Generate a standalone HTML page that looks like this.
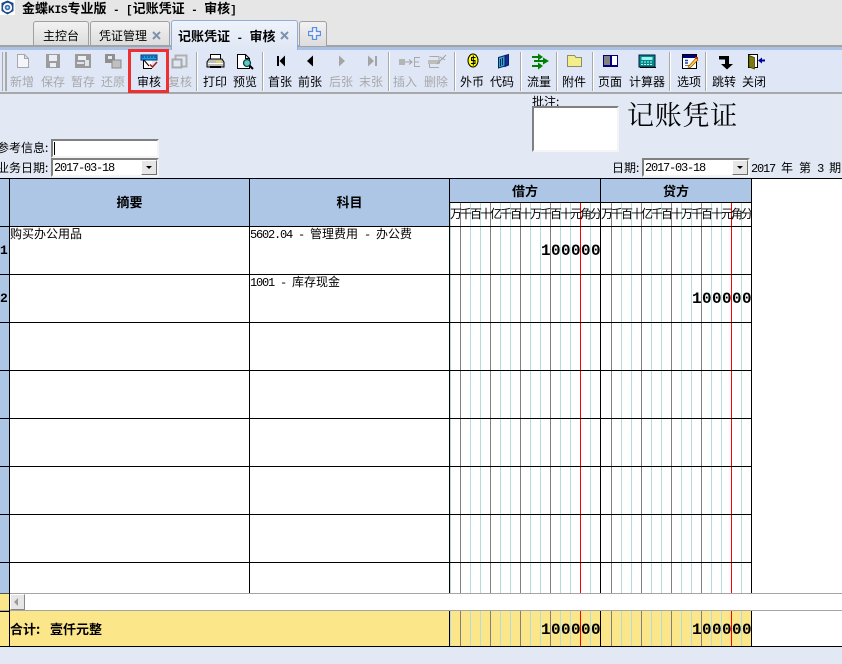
<!DOCTYPE html>
<html lang="zh"><head><meta charset="utf-8">
<style>
html,body{margin:0;padding:0;width:842px;height:664px;overflow:hidden;background:#e2e9f5}
body{position:relative;font:12px/14px "WenQuanYi Zen Hei","Noto Sans CJK SC",sans-serif;color:#000}
.a{position:absolute;white-space:nowrap}
.b{position:absolute}
.l{position:absolute;width:36px;text-align:center;top:75px;line-height:14px;color:#000}
.g{color:#a8a8a8}
.sep{position:absolute;top:52px;width:2px;height:39px;background:linear-gradient(90deg,#a9a9a9 50%,#fff 50%)}
.tab{position:absolute;box-sizing:border-box;border:1px solid #a0a0a0;border-bottom:0;border-radius:3px 3px 0 0;background:linear-gradient(#f2f2f2,#dcdcdc)}
.in{position:absolute;box-sizing:border-box;background:#fff;border:2px solid;border-color:#808080 #f4f4f4 #f4f4f4 #808080}
.mono{font-family:"Liberation Mono",monospace;font-size:12px;line-height:14px;letter-spacing:-1.2px;white-space:pre}
.t{font-family:"Liberation Mono",monospace;font-size:11px;letter-spacing:-.1px;white-space:pre}
.hd{font-weight:bold;font-size:13px;text-align:center;position:absolute}
.sub{position:absolute;top:207px;letter-spacing:-2px;width:151px;overflow:hidden;white-space:nowrap;line-height:14px;height:16px}
.num{position:absolute;font:bold 16px/16px "Liberation Mono",monospace;letter-spacing:.4px;white-space:nowrap}
.dig{position:absolute;background:repeating-linear-gradient(90deg,#808080 0 1px,transparent 1px 10px,#b5dcd8 10px 11px,transparent 11px 20px,#b5dcd8 20px 21px,transparent 21px 30px)}
.h{position:absolute;left:0;width:751px;height:1px;background:#000}
.v{position:absolute;width:1px;background:#000}
</style></head><body>

<!-- title area -->
<div class="b" style="left:0;top:0;width:842px;height:45px;background:#e6e6e6"></div>
<svg class="b" style="left:0;top:0" width="15" height="15" viewBox="0 0 15 15">
<rect width="15" height="15" fill="#fff"/>
<path d="M7.5 0.5 13.5 3V11L7.5 14.5 1.5 11V3Z" fill="#1c4c8c"/>
<circle cx="7.5" cy="7.5" r="4.6" fill="#fff"/>
<circle cx="7.5" cy="7.5" r="2.8" fill="#3f6fb5"/>
<circle cx="7.5" cy="7.5" r="1.1" fill="#dfe8f5"/>
</svg>
<div class="a" style="left:22px;top:1px;font-size:13px;font-weight:bold">金蝶<span class="t">KIS</span>专业版<span class="t"> - [</span>记账凭证<span class="t"> - </span>审核<span class="t">]</span></div>

<!-- tabs -->
<div class="tab" style="left:33px;top:21px;width:56px;height:25px"></div>
<div class="a" style="left:43px;top:29px">主控台</div>
<div class="tab" style="left:90px;top:21px;width:80px;height:25px"></div>
<div class="a" style="left:99px;top:29px">凭证管理</div>
<svg class="b" style="left:152px;top:31px" width="10" height="10"><path d="M1 1 8 8M8 1 1 8" stroke="#7f93ad" stroke-width="2"/></svg>
<div class="b" style="left:0;top:45px;width:842px;height:2px;background:#a3a3a3"></div>
<div class="b" style="left:0;top:47px;width:842px;height:3px;background:#a9c1e6"></div>
<div class="tab" style="left:171px;top:20px;width:127px;height:30px;background:linear-gradient(#eef3fb,#dfe7f5);border-color:#93acd6"></div>
<div class="a" style="left:178px;top:29px;font-size:13px;font-weight:bold">记账凭证<span class="t"> - </span>审核</div>
<svg class="b" style="left:280px;top:31px" width="10" height="10"><path d="M1 1 8 8M8 1 1 8" stroke="#7f93ad" stroke-width="2"/></svg>
<div class="tab" style="left:299px;top:21px;width:28px;height:25px"></div>
<svg class="b" style="left:308px;top:27px" width="13" height="13"><path d="M4.500 .5H8.500V4.500H12.500V8.500H8.500V12.500H4.500V8.500H.5V4.500H4.500Z" fill="#eef3fc" stroke="#5b8ee6" stroke-width="1.300"/></svg>

<!-- toolbar -->
<div class="b" style="left:0;top:50px;width:842px;height:42px;background:#dfe7f6"></div>
<div class="b" style="left:0;top:92px;width:842px;height:2px;background:#a8a8a8"></div>
<div class="b" style="left:2px;top:52px;width:1px;height:39px;background:#a9a9a9"></div>
<div class="b" style="left:5px;top:52px;width:2px;height:39px;background:#a9a9a9"></div>
<div class="sep" style="left:196px"></div><div class="sep" style="left:262px"></div><div class="sep" style="left:388px"></div>
<div class="sep" style="left:454px"></div><div class="sep" style="left:520px"></div><div class="sep" style="left:556px"></div>
<div class="sep" style="left:592px"></div><div class="sep" style="left:669px"></div><div class="sep" style="left:705px"></div>

<div class="l g" style="left:4px">新增</div><div class="l g" style="left:35px">保存</div><div class="l g" style="left:65px">暂存</div><div class="l g" style="left:95px">还原</div>
<div class="l" style="left:131px">审核</div>
<div class="l g" style="width:30px;left:168px;text-align:left;overflow:hidden">复核</div>
<div class="l" style="left:197px">打印</div><div class="l" style="left:227px">预览</div>
<div class="l" style="left:262px">首张</div><div class="l" style="left:292px">前张</div>
<div class="l g" style="left:323px">后张</div><div class="l g" style="left:353px">末张</div>
<div class="l g" style="left:387px">插入</div><div class="l g" style="left:418px">删除</div>
<div class="l" style="left:454px">外币</div><div class="l" style="left:484px">代码</div>
<div class="l" style="left:521px">流量</div><div class="l" style="left:556px">附件</div>
<div class="l" style="left:592px">页面</div><div class="l" style="left:629px">计算器</div>
<div class="l" style="left:671px">选项</div><div class="l" style="left:706px">跳转</div><div class="l" style="left:736px">关闭</div>

<svg class="b" style="left:0;top:0" width="842" height="100" viewBox="0 0 842 100">
<!-- new -->
<path d="M17.500 54.500H24.500L28.500 58.500V67.500H17.500ZM24.500 54.500V58.500H28.500" fill="#f3f5fa" stroke="#a8a8a8"/>
<!-- save -->
<path d="M46 54H60V68H46Z" fill="#9c9c9c"/><rect x="49" y="55" width="8" height="6" fill="#e9edf5"/><rect x="50" y="63" width="6" height="4" fill="#e9edf5"/>
<!-- temp save -->
<path d="M75 54H91V68H75Z" fill="#9a9a9a"/><rect x="78" y="56" width="8" height="4" fill="#eceff6"/><rect x="85" y="60" width="4" height="6" fill="#dfe3ec"/><rect x="77" y="62" width="7" height="2" fill="#dfe3ec"/>
<!-- restore -->
<rect x="105" y="54" width="10" height="9" fill="#8f8f8f"/><rect x="108" y="56" width="4" height="3" fill="#e4e8f0"/><rect x="112" y="60" width="9" height="8" fill="#c0c0c0" stroke="#8a8a8a"/>
<!-- audit -->
<path d="M143.500 58.500V68.500H152" fill="#fff" stroke="#000"/><rect x="144" y="59" width="8" height="9" fill="#fff"/>
<path d="M143.500 59.500 149 66" stroke="#000" fill="none"/>
<rect x="141" y="55" width="16" height="5" fill="#18a4d8" stroke="#0a2a80" stroke-width="1"/>
<path d="M143 56V58M146 56V58M149 56V58M152 56V58M155 56V58" stroke="#0a2a80"/>
<path d="M150 64.500 152.500 67 157 62" stroke="#a01c1c" stroke-width="1.500" fill="none"/>
<!-- recheck -->
<rect x="175.500" y="55.500" width="11" height="11" fill="none" stroke="#b0b0b0" stroke-width="2"/>
<rect x="172.500" y="59.500" width="9" height="8" fill="#dfe7f6" stroke="#a8a8a8" stroke-width="2"/>
<!-- print -->
<path d="M210.500 54.500H220.500V60.500H210.500Z" fill="#fff" stroke="#000"/>
<path d="M209 59H222L224 62V67H207V62Z" fill="#bcbcbc" stroke="#000"/>
<rect x="208" y="63" width="15" height="1" fill="#fff"/><rect x="216" y="61" width="5" height="1.500" fill="#f0e030"/><rect x="210" y="66" width="11" height="2" fill="#000"/>
<!-- preview -->
<path d="M237.500 54.500H245.500L249.500 58.500V68.500H237.500ZM245.500 54.500V58.500H249.500" fill="#fff" stroke="#000"/>
<circle cx="247" cy="63" r="3.500" fill="#5cc8c8" stroke="#0c4040" stroke-width="1.300"/>
<path d="M249.500 65.500 253 69" stroke="#000" stroke-width="2"/>
<!-- nav -->
<rect x="277" y="56" width="2" height="10" fill="#000"/><path d="M285 55.500V66.500L279.500 61Z" fill="#000"/>
<path d="M313 55.500V66.500L307 61Z" fill="#000"/>
<path d="M339 55.500V66.500L345 61Z" fill="#a4a4a4"/>
<path d="M368 55.500V66.500L374 61Z" fill="#a4a4a4"/><rect x="375" y="56" width="2" height="10" fill="#a4a4a4"/>
<!-- insert -->
<path d="M399 59H405V65H399Z" fill="#b4b4b4"/><path d="M405 62H412M409 59.500 412 62 409 64.500" stroke="#a0a0a0" fill="none"/><path d="M420 57.500H414.500V66.500H420M414.500 62H419" stroke="#a8a8a8" fill="none"/>
<!-- delete -->
<path d="M429.500 56.500H439M429.500 62H437M429.500 67.500H439M439 56.500V60M429.500 67.500V60" stroke="#a8a8a8" fill="none"/><rect x="428" y="60" width="12" height="4" fill="#bdbdbd"/><path d="M437 64 446 55M440 57 445 60" stroke="#a0a0a0" fill="none"/>
<!-- currency -->
<ellipse cx="473" cy="60.500" rx="5" ry="6.500" fill="#ffff00" stroke="#000"/>
<path d="M475.500 57.500H471.500V60.500H475V63.500H471M473.300 55.500V65.500" stroke="#000" fill="none"/>
<!-- code -->
<path d="M498.500 57.500 505 55.500V66L498.500 68Z" fill="#38a8b0" stroke="#00207a"/><path d="M505 55.500 508.500 54.500V65L505 66.500Z" fill="#1a2a90" stroke="#00207a"/><path d="M500.500 59V66M502.500 58V65" stroke="#00207a"/>
<!-- flow -->
<g fill="#008000"><rect x="532" y="56" width="9" height="2"/><path d="M538 53.500 543 57 538 60.500Z"/><rect x="537" y="60" width="7" height="2"/><path d="M543 57.500 549 61 543 64.500Z"/><rect x="532" y="65" width="9" height="2"/><path d="M538 62.500 543 66 538 69.500Z"/></g><rect x="534" y="60" width="3" height="2" fill="#008000"/>
<!-- folder -->
<path d="M567.500 66.500V55.500H574.500L576 57.500H581.500V66.500Z" fill="#f3ee8a" stroke="#8c8c70"/>
<!-- page -->
<path d="M603.500 55.500H610.500V66H603.500Z" fill="#808080" stroke="#000080"/><path d="M611.500 55.500H617.500V66H611.500Z" fill="#fff" stroke="#000080"/><rect x="603" y="65" width="15" height="2" fill="#000080"/>
<!-- calc -->
<rect x="639" y="55" width="16" height="12" fill="#008a8a" stroke="#001a40"/><rect x="641.500" y="57" width="11" height="3" fill="#9ff0f0"/><path d="M641 62H653M641 64.500H653" stroke="#c8f0f0" stroke-dasharray="2 1"/><rect x="640" y="67" width="16" height="1" fill="#000"/>
<!-- options -->
<rect x="682.500" y="54.500" width="14" height="14" fill="#fff" stroke="#000"/><rect x="683" y="55" width="13" height="3" fill="#000080"/><path d="M685 60.500H688M685 63H688" stroke="#2040a0" stroke-width="1.500"/><path d="M685 65.500H690" stroke="#808080"/>
<path d="M688 67 696 58 698 60 690 68Z" fill="#ffd040" stroke="#804000" stroke-width=".6"/><rect x="695" y="57" width="3" height="2" fill="#e02020"/>
<!-- jump -->
<path d="M719 56H729V64H733L727 69.500 721 64H725V59.500H719Z" fill="#000"/>
<!-- close -->
<path d="M748.500 54.500H757.500V67.500H748.500Z" fill="#fff" stroke="#000"/><path d="M749 55.500 754.500 57.500V69L749 67Z" fill="#7a7a10" stroke="#3a3a00" stroke-width=".7"/>
<path d="M758 60.500 762 57.500V59.500H765V61.500H762V63.500Z" fill="#0000a0"/>
</svg>

<!-- red box -->
<div class="b" style="left:128px;top:49px;width:35px;height:38px;border:3px solid #f03030"></div>

<!-- form -->
<div class="a" style="left:-3px;top:141px">参考信息:</div>
<div class="in" style="left:51px;top:139px;width:108px;height:19px"></div>
<div class="b" style="left:54px;top:142px;width:1px;height:13px;background:#000"></div>
<div class="a" style="left:-3px;top:161px">业务日期:</div>
<div class="in" style="left:51px;top:158px;width:108px;height:19px"></div>
<div class="a mono" style="left:54px;top:161px">2017-03-18</div>
<div class="b" style="left:141px;top:160px;width:16px;height:15px;box-sizing:border-box;background:#e6e6e6;border:1px solid;border-color:#fff #707070 #707070 #fff"></div>
<svg class="b" style="left:146px;top:166px" width="7" height="4"><path d="M0 0H6L3 3Z" fill="#000"/></svg>

<div class="a" style="left:532px;top:95px">批注:</div>
<div class="in" style="left:532px;top:106px;width:87px;height:46px"></div>
<div class="a" style="left:627px;top:98px;font:27px/32px 'Noto Serif CJK SC',serif;letter-spacing:.7px">记账凭证</div>

<div class="a" style="left:612px;top:161px">日期:</div>
<div class="in" style="left:642px;top:158px;width:108px;height:19px"></div>
<div class="a mono" style="left:645px;top:161px">2017-03-18</div>
<div class="b" style="left:732px;top:160px;width:16px;height:15px;box-sizing:border-box;background:#e6e6e6;border:1px solid;border-color:#fff #707070 #707070 #fff"></div>
<svg class="b" style="left:737px;top:166px" width="7" height="4"><path d="M0 0H6L3 3Z" fill="#000"/></svg>
<div class="a" style="left:751px;top:161px"><span class="mono">2017 </span>年<span class="mono"> </span>第<span class="mono"> 3 </span>期</div>

<!-- grid base -->
<div class="b" style="left:0;top:178px;width:842px;height:415px;background:#fff"></div>
<div class="b" style="left:0;top:179px;width:9px;height:414px;background:#adc6e5"></div>
<div class="b" style="left:10px;top:179px;width:741px;height:47px;background:#adc6e5"></div>
<div class="b" style="left:450px;top:203px;width:301px;height:23px;background:#fff"></div>

<!-- digit lines -->
<div class="dig" style="left:460px;top:203px;width:140px;height:390px"></div>
<div class="dig" style="left:611px;top:203px;width:140px;height:390px"></div>
<div class="b" style="left:450px;top:203px;width:1px;height:390px;background:#b5dcd8"></div>
<div class="b" style="left:580px;top:203px;width:1px;height:390px;background:#f00"></div>
<div class="b" style="left:731px;top:203px;width:1px;height:390px;background:#f00"></div>

<!-- horizontals -->
<div class="b" style="left:0;top:178px;width:842px;height:1px;background:#000"></div>
<div class="b" style="left:450px;top:202px;width:301px;height:1px;background:#000"></div>
<div class="h" style="top:226px"></div><div class="h" style="top:274px"></div><div class="h" style="top:322px"></div>
<div class="h" style="top:370px"></div><div class="h" style="top:418px"></div><div class="h" style="top:466px"></div>
<div class="h" style="top:514px"></div><div class="h" style="top:562px"></div>
<!-- verticals -->
<div class="v" style="left:9px;top:178px;height:415px"></div>
<div class="v" style="left:249px;top:178px;height:415px"></div>
<div class="v" style="left:449px;top:178px;height:415px"></div>
<div class="v" style="left:600px;top:178px;height:415px"></div>
<div class="v" style="left:751px;top:178px;height:415px"></div>

<!-- header text -->
<div class="hd" style="left:10px;top:195px;width:239px">摘要</div>
<div class="hd" style="left:250px;top:195px;width:199px">科目</div>
<div class="hd" style="left:450px;top:184px;width:150px">借方</div>
<div class="hd" style="left:601px;top:184px;width:150px">贷方</div>
<div class="sub" style="left:450px">万千百十亿千百十万千百十元角分</div>
<div class="sub" style="left:601px;width:150px">万千百十亿千百十万千百十元角分</div>

<!-- rows -->
<div class="a" style="left:10px;top:227px">购买办公用品</div>
<div class="a" style="left:250px;top:227px"><span class="mono">5602.04 - </span>管理费用<span class="mono"> - </span>办公费</div>
<div class="a" style="left:250px;top:275px"><span class="mono">1001 - </span>库存现金</div>
<div class="a" style="left:0;top:243px;font:13px/16px 'Liberation Mono',monospace;font-weight:bold">1</div>
<div class="a" style="left:0;top:291px;font:13px/16px 'Liberation Mono',monospace;font-weight:bold">2</div>
<div class="num" style="left:541px;top:243px">100000</div>
<div class="num" style="left:692px;top:291px">100000</div>

<!-- scrollbar -->
<div class="b" style="left:0;top:593px;width:842px;height:17px;background:#fff"></div>
<div class="b" style="left:0;top:593px;width:9px;height:53px;background:#fbe68a"></div>
<div class="b" style="left:0;top:593px;width:842px;height:1px;background:#a5a5a5"></div>
<div class="b" style="left:0;top:593px;width:10px;height:1px;background:#555"></div>
<div class="b" style="left:0;top:611px;width:9px;height:1px;background:#000"></div>
<div class="b" style="left:10px;top:594px;width:15px;height:16px;box-sizing:border-box;background:#e6e6e6;border:1px solid;border-color:#fff #888 #888 #fff"></div>
<svg class="b" style="left:14px;top:598px" width="6" height="9"><path d="M4 0V8L0 4Z" fill="#9a9a9a"/></svg>
<div class="b" style="left:0;top:610px;width:842px;height:1px;background:#a5a5a5"></div>

<!-- footer -->
<div class="b" style="left:10px;top:611px;width:741px;height:35px;background:#fbe68a"></div>
<div class="b" style="left:751px;top:611px;width:91px;height:35px;background:#fff"></div>
<div class="dig" style="left:460px;top:611px;width:140px;height:35px"></div>
<div class="dig" style="left:611px;top:611px;width:140px;height:35px"></div>
<div class="b" style="left:450px;top:611px;width:1px;height:35px;background:#b5dcd8"></div>
<div class="b" style="left:580px;top:611px;width:1px;height:35px;background:#f00"></div>
<div class="b" style="left:731px;top:611px;width:1px;height:35px;background:#f00"></div>
<div class="v" style="left:9px;top:593px;height:53px"></div>
<div class="v" style="left:449px;top:611px;height:35px"></div>
<div class="v" style="left:600px;top:611px;height:35px"></div>
<div class="v" style="left:751px;top:611px;height:35px"></div>
<div class="b" style="left:0;top:646px;width:842px;height:1px;background:#000"></div>
<div class="a" style="left:10px;top:622px;font-weight:bold;font-size:13px">合计:</div>
<div class="a" style="left:50px;top:622px;font-weight:bold;font-size:13px">壹仟元整</div>
<div class="num" style="left:541px;top:622px">100000</div>
<div class="num" style="left:692px;top:622px">100000</div>
</body></html>
